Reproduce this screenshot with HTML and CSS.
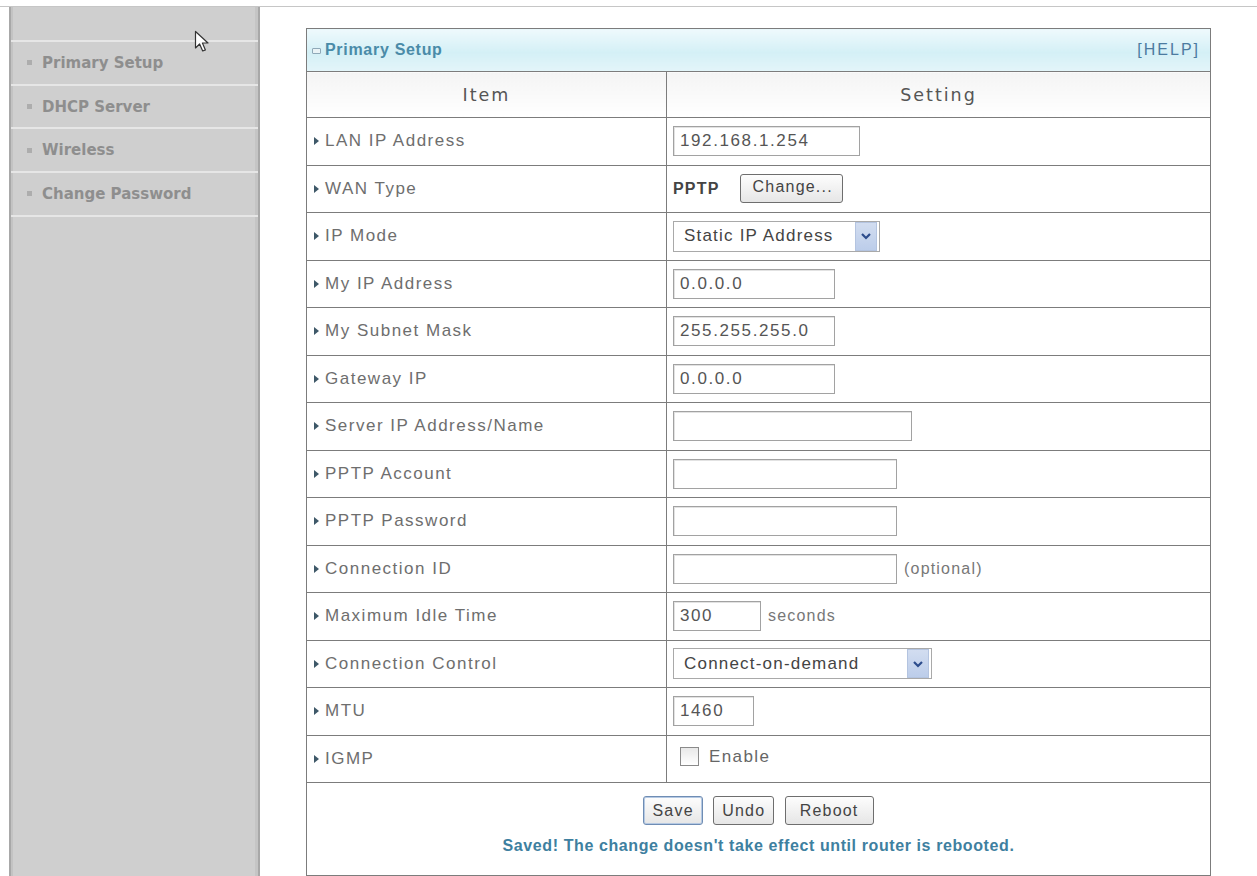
FILE: index.html
```html
<!DOCTYPE html>
<html>
<head>
<meta charset="UTF-8">
<link rel="stylesheet" href="styles.css">
</head>
<body>
<div class="topline"></div>
<div class="page">
	<div class="menu">
		<div class="menuhead"></div>
		<div class="item">Primary Setup</div>
		<div class="item">DHCP Server</div>
		<div class="item">Wireless</div>
		<div class="item">Change Password</div>
	</div>

	<div class="main">
		<table class="setup">
			<colgroup><col class="colitem"><col class="colset"></colgroup>
			<tr class="caption">
				<td colspan="2">
					<div class="capbar">
						<span class="capicon"></span>
						<span class="captitle">Primary Setup</span>
						<span class="help">[HELP]</span>
					</div>
				</td>
			</tr>
			<tr class="head"><th>Item</th><th>Setting</th></tr>
			<tr>
				<td class="label">LAN IP Address</td>
				<td class="value"><input class="txt w186" type="text" value="192.168.1.254"></td>
			</tr>
			<tr>
				<td class="label">WAN Type</td>
				<td class="value"><b class="wan">PPTP</b><button class="btn change">Change...</button></td>
			</tr>
			<tr>
				<td class="label">IP Mode</td>
				<td class="value"><div class="select w207"><span>Static IP Address</span><i class="arrow"><svg width="12" height="8" viewBox="0 0 12 8"><path d="M2 2 L6 6 L10 2" fill="none" stroke="#2C4C8C" stroke-width="2.2"/></svg></i></div></td>
			</tr>
			<tr>
				<td class="label">My IP Address</td>
				<td class="value"><input class="txt w161" type="text" value="0.0.0.0"></td>
			</tr>
			<tr>
				<td class="label">My Subnet Mask</td>
				<td class="value"><input class="txt w161" type="text" value="255.255.255.0"></td>
			</tr>
			<tr>
				<td class="label">Gateway IP</td>
				<td class="value"><input class="txt w161" type="text" value="0.0.0.0"></td>
			</tr>
			<tr>
				<td class="label">Server IP Address/Name</td>
				<td class="value"><input class="txt w238" type="text" value=""></td>
			</tr>
			<tr>
				<td class="label">PPTP Account</td>
				<td class="value"><input class="txt w223" type="text" value=""></td>
			</tr>
			<tr>
				<td class="label">PPTP Password</td>
				<td class="value"><input class="txt w223" type="text" value=""></td>
			</tr>
			<tr>
				<td class="label">Connection ID</td>
				<td class="value"><input class="txt w223" type="text" value=""><span class="note">(optional)</span></td>
			</tr>
			<tr>
				<td class="label">Maximum Idle Time</td>
				<td class="value"><input class="txt w87" type="text" value="300"><span class="note">seconds</span></td>
			</tr>
			<tr>
				<td class="label">Connection Control</td>
				<td class="value"><div class="select w259"><span>Connect-on-demand</span><i class="arrow"><svg width="12" height="8" viewBox="0 0 12 8"><path d="M2 2 L6 6 L10 2" fill="none" stroke="#2C4C8C" stroke-width="2.2"/></svg></i></div></td>
			</tr>
			<tr>
				<td class="label">MTU</td>
				<td class="value"><input class="txt w80" type="text" value="1460"></td>
			</tr>
			<tr>
				<td class="label">IGMP</td>
				<td class="value"><label class="check"><span class="box"></span>Enable</label></td>
			</tr>
			<tr class="foot">
				<td colspan="2">
					<div class="buttons">
						<button class="btn save">Save</button>
						<button class="btn">Undo</button>
						<button class="btn reboot">Reboot</button>
					</div>
					<p class="msg">Saved! The change doesn't take effect until router is rebooted.</p>
				</td>
			</tr>
		</table>
	</div>
</div>
<svg class="cursor" width="17" height="23" viewBox="0 0 17 23"><path d="M1.5 1.5 L1.5 18 L5.6 14 L8.7 21 L11.4 19.9 L8.4 13 L14 13 Z" fill="#FFF" stroke="#333" stroke-width="1.2" stroke-linejoin="round"/></svg>
</body>
</html>
```

FILE: styles.css
```css
body{
	margin:0;
	font-family:"Liberation Sans", Arial, sans-serif;
	color:#666;
	background:#FFF;
	overflow:hidden;
}
.topline{
	height:1px;
	margin-top:6px;
	background:#C6C6C6;
}
.page{
	display:flex;
	align-items:flex-start;
}

/* left menu */
.menu{
	width:247px;
	height:869px;
	margin-left:9px;
	background:#CFCFCF;
	border-left:2px solid #A8A8A8;
	border-right:2px solid #A8A8A8;
	box-shadow:inset 2px 0 0 #C3C3C3, inset -3px 0 0 #C5C5C5;
}
.menuhead{
	height:33px;
	border-bottom:2px solid #E6E6E6;
}
.menu .item{
	display:flex;
	align-items:center;
	height:41.7px;
	padding-left:16px;
	border-bottom:2px solid #E6E6E6;
	font-family:"DejaVu Sans", Verdana, sans-serif;
	font-weight:bold;
	font-size:15px;
	color:#8E8E8E;
}
.menu .item:before{
	content:"";
	width:5px;
	height:5px;
	margin-right:10px;
	background:#ADADAD;
}

/* setup table */
.main{
	margin-left:46px;
	margin-top:21px;
}
.setup{
	width:905px;
	border-collapse:collapse;
	border:1px solid #7C7C7C;
}
.colitem{
	width:360px;
}
.setup td, .setup th{
	border:1px solid #7C7C7C;
	padding:0;
}
.caption td{
	height:42px;
	background:linear-gradient(#EEF9FC, #D4F0F6 55%, #E3F5F9);
}
.capbar{
	display:flex;
	align-items:center;
	padding:0 10px 0 5px;
}
.capicon{
	width:7px;
	height:4px;
	border:1px solid #8FA9B8;
	border-radius:1px;
	background:#E9F3F6;
	margin-right:4px;
	margin-top:2px;
}
.captitle{
	font-size:16px;
	font-weight:bold;
	letter-spacing:0.7px;
	color:#4A8BA8;
}
.help{
	margin-left:auto;
	font-size:16px;
	letter-spacing:2px;
	color:#4C7BA0;
}
.head th{
	height:45px;
	font-family:"DejaVu Sans", Verdana, sans-serif;
	font-weight:normal;
	font-size:17.5px;
	letter-spacing:2px;
	color:#555;
	background:linear-gradient(#F4F4F4, #FFF);
}
.label, .value{
	height:46.5px;
	font-size:17px;
	letter-spacing:1.5px;
	color:#6E6E6E;
}
.label{
	padding-left:7px !important;
}
.label:before{
	content:"";
	display:inline-block;
	width:0;
	height:0;
	border-top:4px solid transparent;
	border-bottom:4px solid transparent;
	border-left:5px solid #3E5868;
	margin-right:6px;
	vertical-align:1px;
}
.value{
	padding-left:6px !important;
}
.txt{
	box-sizing:border-box;
	height:30px;
	padding:0 6px;
	border:1px solid #A2A2A2;
	box-shadow:inset 1px 1px 0 #E2E2E2;
	font-family:"Liberation Sans", Arial, sans-serif;
	font-size:17px;
	letter-spacing:1.6px;
	color:#555;
	vertical-align:middle;
}
.w186{ width:187px; }
.w161{ width:162px; }
.w238{ width:239px; }
.w223{ width:224px; }
.w87{ width:88px; }
.w80{ width:81px; }
.note{
	margin-left:7px;
	font-size:16px;
	letter-spacing:1.2px;
	color:#777;
	vertical-align:middle;
}
.wan{
	font-size:16px;
	letter-spacing:1.2px;
	color:#444;
	vertical-align:middle;
}
.btn{
	height:29px;
	padding:0 12px;
	border:1px solid #6E6E6E;
	border-radius:3px;
	background:linear-gradient(#FDFDFD, #E6E6E6);
	font-family:"Liberation Sans", Arial, sans-serif;
	font-size:16px;
	letter-spacing:1.2px;
	color:#444;
	vertical-align:middle;
}
.change{
	width:103px;
	margin-left:20px;
	padding-bottom:3px;
}
.select{
	display:inline-flex;
	align-items:center;
	box-sizing:border-box;
	height:31px;
	padding:1px 2px 1px 10px;
	border:1px solid #A9A9A9;
	vertical-align:middle;
	font-size:17px;
	letter-spacing:1.2px;
	color:#444;
}
.select span{
	flex:1;
}
.w207{ width:207px; }
.w259{ width:259px; }
.arrow{
	display:flex;
	align-items:center;
	justify-content:center;
	width:20px;
	height:100%;
	background:linear-gradient(#D2DDF0, #BCCDEA);
	border:1px solid #B4C4E0;
}
.check{
	display:inline-flex;
	align-items:center;
	margin-left:7px;
	font-size:17px;
	letter-spacing:1.4px;
	color:#666;
}
.check .box{
	width:17px;
	height:17px;
	margin-right:10px;
	border:1px solid #8A8A8A;
	background:linear-gradient(#E8E8E8, #FFF);
}
.foot td{
	height:92px;
	text-align:center;
	vertical-align:top;
}
.buttons{
	margin-top:13px;
}
.buttons .btn{
	height:29px;
	margin:0 3px;
	padding:0 8px;
}
.buttons .save{
	border-color:#6F8DB4;
	box-shadow:inset 0 0 0 1px #B5C9E3;
}
.buttons .reboot{
	padding:0 14px;
}
.msg{
	margin:12px 0 0;
	font-size:16px;
	font-weight:bold;
	letter-spacing:0.6px;
	color:#3E80A0;
}
.cursor{
	position:absolute;
	left:194px;
	top:30px;
}
```
